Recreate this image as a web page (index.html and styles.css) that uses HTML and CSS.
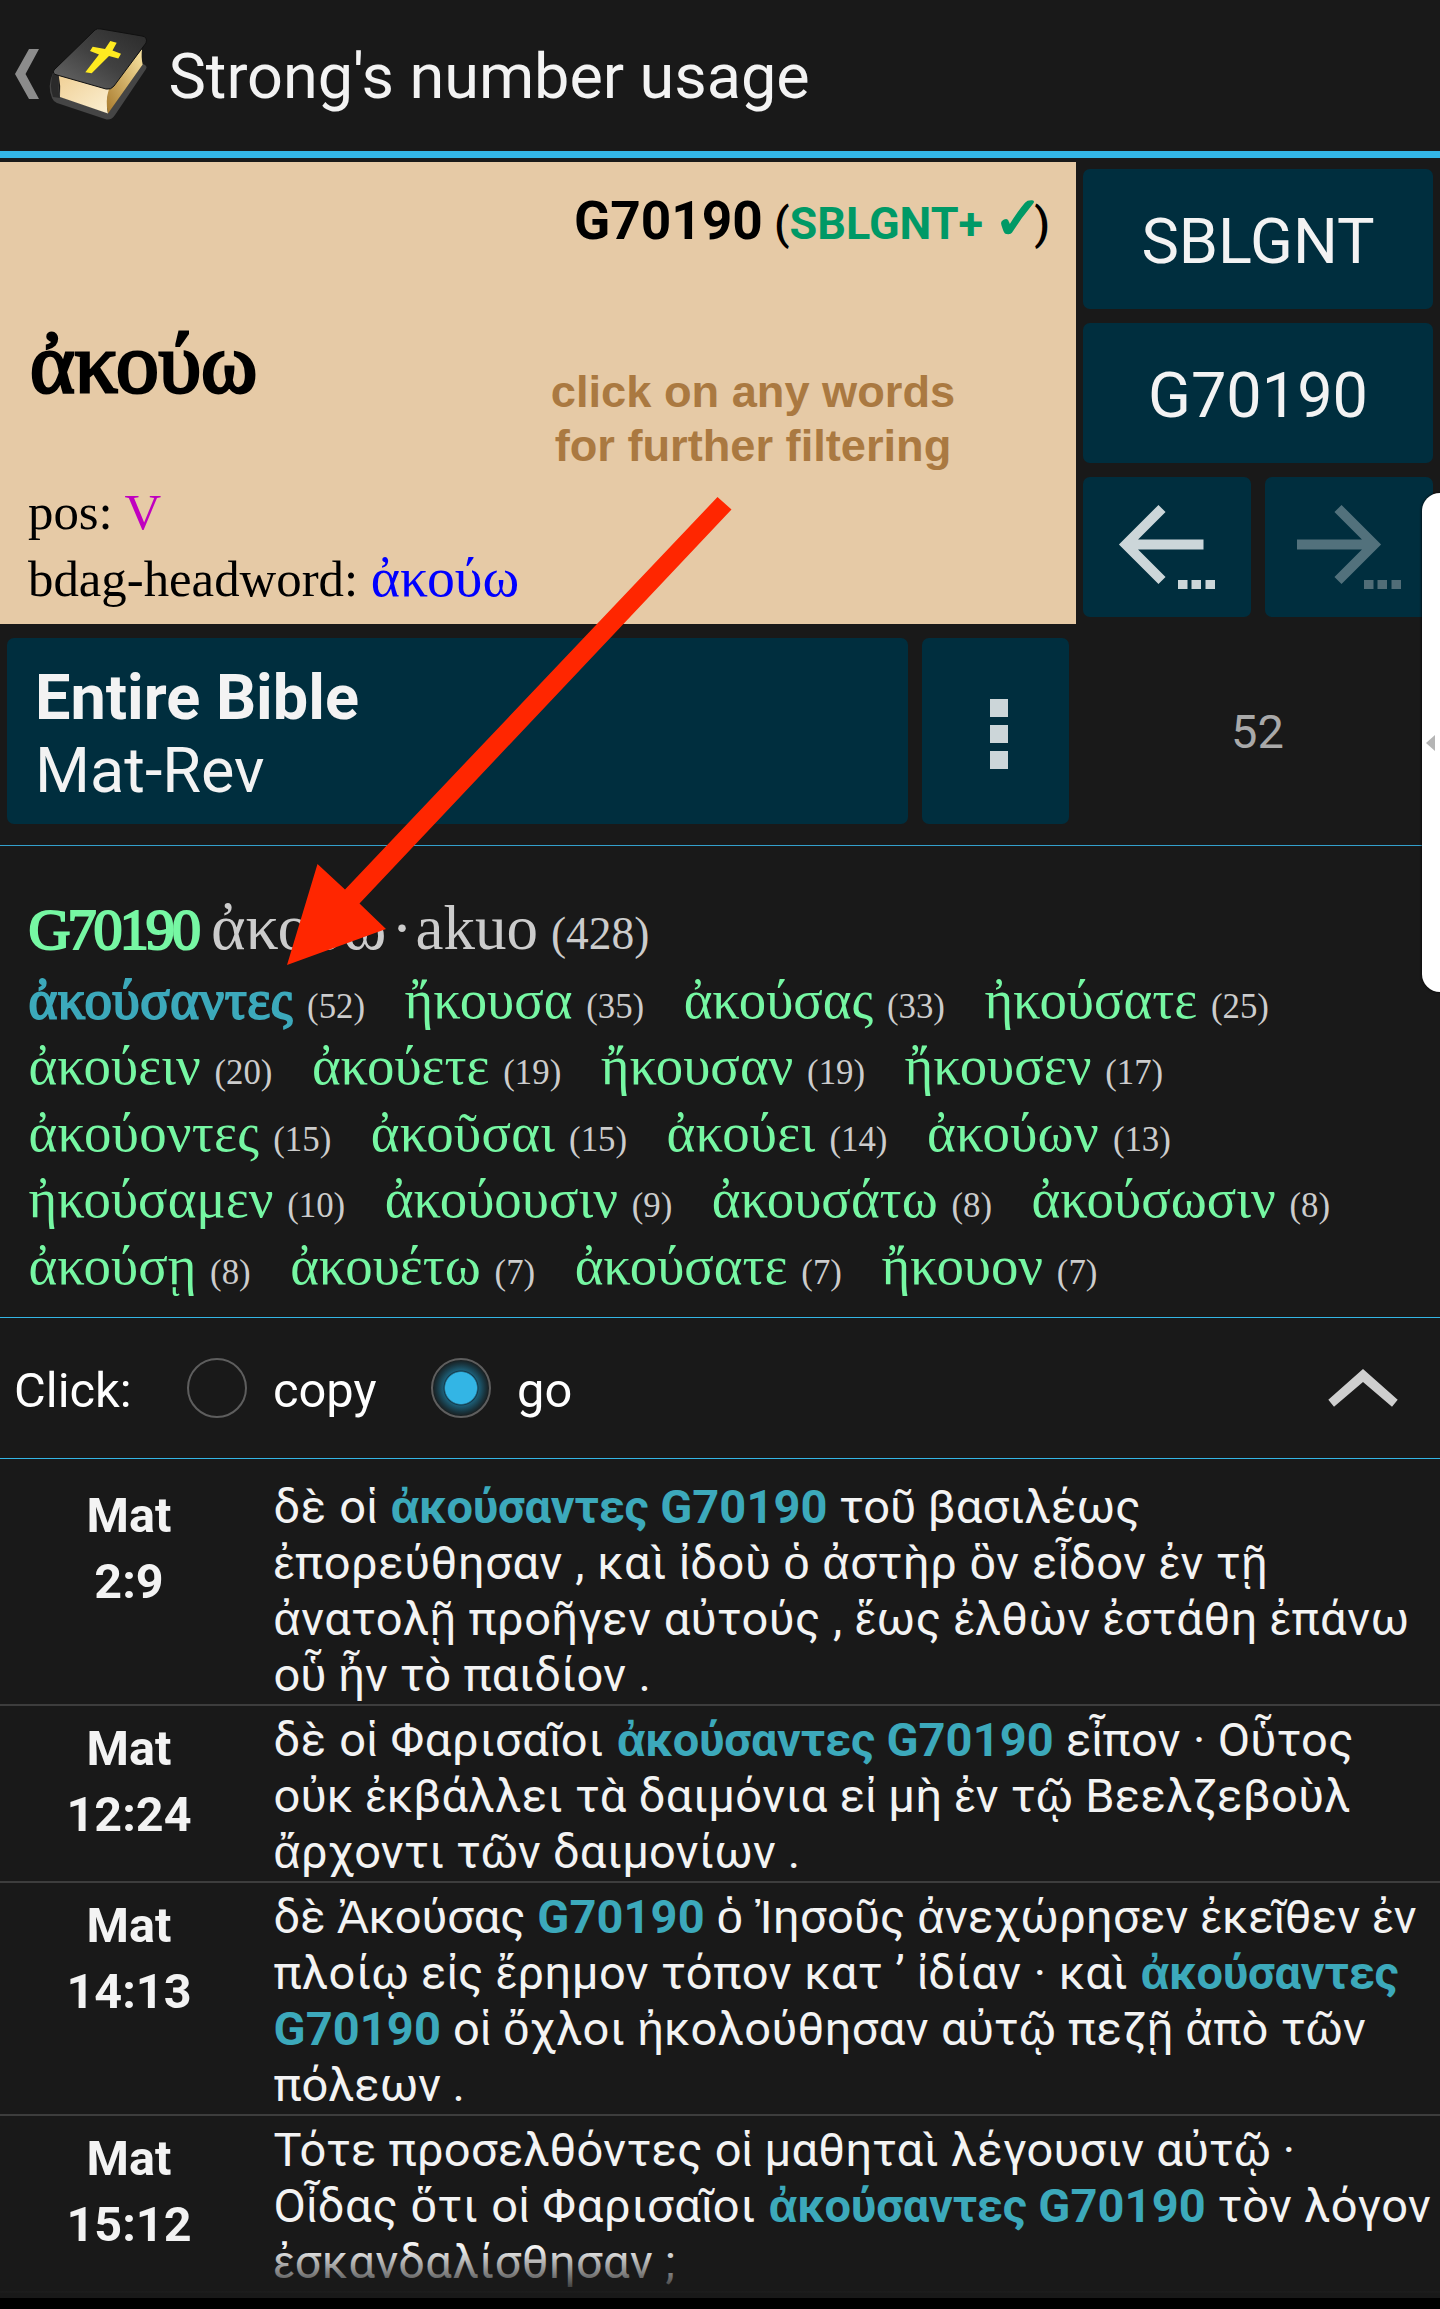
FILE: index.html
```html
<!DOCTYPE html>
<html lang="en">
<head>
<meta charset="utf-8">
<title>Strong's number usage</title>
<link rel="stylesheet" href="styles.css">
</head>
<body>
<div class="screen">
  <header class="bar">
    <svg class="bar-icon" width="150" height="151" viewBox="0 0 150 151">
      <defs>
        <linearGradient id="cover" x1="0" y1="1" x2="1" y2="0"><stop offset="0" stop-color="#6a6a6a"/><stop offset=".5" stop-color="#414141"/><stop offset="1" stop-color="#2a2a2a"/></linearGradient>
        <linearGradient id="front" x1="0" y1="0" x2="1" y2="1"><stop offset="0" stop-color="#f0d096"/><stop offset="1" stop-color="#fbf0d3"/></linearGradient>
        <linearGradient id="side" x1="0" y1="1" x2="1" y2="0"><stop offset="0" stop-color="#a87a2c"/><stop offset="1" stop-color="#fbe6a4"/></linearGradient>
      </defs>
      <path d="M29 49h10l-13.500 25 13.500 25h-10l-14-25z" fill="#8c8c8c"/>
      <path d="M53 73Q47 86 52 98Q53 101 57 103L105 119Q111 121 115 115L146 69Q148 66 143 64L108 113L61 97Q57 86 60 76z" fill="#454545"/>
      <path d="M53 73Q49 86 53 97L60 98Q57 86 60 76z" fill="#2a2a2a"/>
      <path d="M58.700 75L107 88L110 89Q105 101 108 113.500L60 97Q61 86 58.700 75z" fill="url(#front)"/>
      <path d="M109 89L142 49Q141 58 142.700 64.500L108 113.500Q105 101 109 89z" fill="url(#side)"/>
      <path d="M95 30Q97 28 101 29L142 36Q148 37 146 43L114 86Q111 90 106 89L57 75Q52 74 54 70z" fill="url(#cover)" stroke="#101010"/>
      <path d="M110.300 41L116.700 42.700L112.500 50.500L121 53.700L118.300 58.500L109 56L91.700 73.300L85.300 72.300L99 54.500L90 51L92.700 46.700L105 49z" fill="#ffea20"/>
    </svg>
    <h1 class="title">Strong's number usage</h1>
  </header>

  <section class="top">
    <div class="entry">
      <p class="entry-ref"><b>G70190</b> <span class="mid">(<em>SBLGNT+ <i>✓</i></em>)</span></p>
      <p class="headword">ἀκούω</p>
      <p class="prop">pos: <span class="magenta">V</span></p>
      <p class="prop">bdag-headword: <span class="blue">ἀκούω</span></p>
    </div>
    <div class="pad">
      <button class="btn wide">SBLGNT</button>
      <button class="btn wide">G70190</button>
      <button class="btn"><svg width="168" height="140" viewBox="0 0 168 140"><path d="M79 31.500L43 67.500L79 103.500M45 67.500H120.500" fill="none" stroke="#ccd6d9" stroke-width="10"/><path d="M95 103h9.500v9h-9.500zM108.500 103h9.500v9h-9.500zM122.500 103h9.500v9h-9.500z" fill="#ccd6d9"/></svg></button>
      <button class="btn"><svg width="168" height="140" viewBox="0 0 168 140"><g opacity=".4"><path d="M73 31.500L109 67.500L73 103.500M107 67.500H32" fill="none" stroke="#ccd6d9" stroke-width="10"/></g><path d="M99 103h9.500v9h-9.500zM112.500 103h9.500v9h-9.500zM126.500 103h9.500v9h-9.500z" fill="#516d77"/></svg></button>
    </div>
  </section>

  <section class="scope">
    <button class="btn range"><b>Entire Bible</b><span>Mat-Rev</span></button>
    <button class="btn more"><i></i><i></i><i></i></button>
    <span class="total">52</span>
  </section>

  <section class="forms">
    <p class="lemma"><b>G70190</b><span class="greek">ἀκούω</span><span class="dot">·</span><span>akuo</span><small>(428)</small></p>
    <div class="line"><span class="on">ἀκούσαντες <small>(52)</small></span><span>ἤκουσα <small>(35)</small></span><span>ἀκούσας <small>(33)</small></span><span>ἠκούσατε <small>(25)</small></span></div>
    <div class="line"><span>ἀκούειν <small>(20)</small></span><span>ἀκούετε <small>(19)</small></span><span>ἤκουσαν <small>(19)</small></span><span>ἤκουσεν <small>(17)</small></span></div>
    <div class="line t2"><span>ἀκούοντες <small>(15)</small></span><span>ἀκοῦσαι <small>(15)</small></span><span>ἀκούει <small>(14)</small></span><span>ἀκούων <small>(13)</small></span></div>
    <div class="line"><span>ἠκούσαμεν <small>(10)</small></span><span>ἀκούουσιν <small>(9)</small></span><span>ἀκουσάτω <small>(8)</small></span><span>ἀκούσωσιν <small>(8)</small></span></div>
    <div class="line"><span>ἀκούσῃ <small>(8)</small></span><span>ἀκουέτω <small>(7)</small></span><span>ἀκούσατε <small>(7)</small></span><span>ἤκουον <small>(7)</small></span></div>
  </section>

  <section class="mode">
    <span class="mode-label">Click:</span>
    <label class="option"><i class="radio"></i><span>copy</span></label>
    <label class="option"><i class="radio checked"></i><span>go</span></label>
    <svg class="collapse" width="74" height="42" viewBox="0 0 74 42"><path d="M39 2L73.700 32.700L68 39.700L39 15L10 39.700L4.300 32.700z" fill="#cfcfcf"/></svg>
  </section>

  <section class="verses">
    <article class="verse"><h2>Mat<br>2:9</h2><p><span class="t7">δὲ οἱ </span><b>ἀκούσαντες</b> <b class="num">G70190</b> <span class="t1">τοῦ βασιλέως</span><br><span class="t6">ἐπορεύθησαν , καὶ ἰδοὺ ὁ ἀστὴρ ὃν εἶδον ἐν τῇ</span><br><span class="t5">ἀνατολῇ προῆγεν αὐτούς , ἕως ἐλθὼν ἐστάθη ἐπάνω</span><br><span class="t3">οὗ ἦν τὸ παιδίον .</span></p></article>
    <article class="verse"><h2>Mat<br>12:24</h2><p><span class="t7">δὲ οἱ Φαρισαῖοι </span><b>ἀκούσαντες</b> <b class="num">G70190</b><span class="t4"> εἶπον · Οὗτος</span><br><span class="t4">οὐκ ἐκβάλλει τὰ δαιμόνια εἰ μὴ ἐν τῷ Βεελζεβοὺλ</span><br><span class="t2">ἄρχοντι τῶν δαιμονίων .</span></p></article>
    <article class="verse"><h2>Mat<br>14:13</h2><p>δὲ Ἀκούσας <b class="num">G70190</b><span class="t3"> ὁ Ἰησοῦς ἀνεχώρησεν ἐκεῖθεν ἐν</span><br><span class="t5">πλοίῳ εἰς ἔρημον τόπον κατ ’ ἰδίαν · καὶ </span><b>ἀκούσαντες</b><br><b class="num">G70190</b><span class="t4"> οἱ ὄχλοι ἠκολούθησαν αὐτῷ πεζῇ ἀπὸ τῶν</span><br>πόλεων .</p></article>
    <article class="verse"><h2>Mat<br>15:12</h2><p><span class="t3">Τότε προσελθόντες οἱ μαθηταὶ λέγουσιν αὐτῷ ·</span><br><span class="t7">Οἶδας ὅτι οἱ Φαρισαῖοι </span><b>ἀκούσαντες</b> <b class="num">G70190</b><span class="t4"> τὸν λόγον</span><br><span class="t4">ἐσκανδαλίσθησαν ;</span></p></article>
  </section>

  <div class="fade"></div>
  <p class="hint">click on any words<br>for further filtering</p>
  <svg class="arrow" width="460" height="480" viewBox="280 490 460 480"><path d="M717.500 497L731.500 509.500L359.500 903.500L386 929L287 965L317.500 864L345 889.500z" fill="#ff2600"/></svg>
  <div class="edge"><svg width="10" height="16" viewBox="0 0 10 16"><path d="M0 8L9 0V16z" fill="#b5b5b5"/></svg></div>
</div>
</body>
</html>
```

FILE: styles.css
```css
* { box-sizing: border-box; margin: 0; padding: 0; }
body { background: #191919; }
.screen { position: relative; width: 1440px; height: 2309px; overflow: hidden; background: #191919; color: #f3f3f3; font-family: Roboto, sans-serif; }
.bar { display: flex; height: 158px; border-bottom: 7px solid #33b5e5; }
.bar-icon { flex: none; }
.title { margin-left: 18.5px; font-size: 63px; font-weight: 400; line-height: 154px; letter-spacing: -.06px; white-space: nowrap; }
.top { display: flex; height: 466px; padding-top: 4px; }
.entry { width: 1076px; height: 462px; background: #e6caa6; color: #000; padding: 0 26px 0 28px; font-family: "Liberation Serif", serif; }
.entry-ref { height: 150px; padding-top: 27px; text-align: right; font: 45px/64px Roboto, sans-serif; white-space: nowrap; }
.entry-ref b { font-size: 53.2px; font-weight: 700; }
.mid { font-weight: 500; }
.entry-ref em { font-style: normal; font-weight: 700; color: #009966; }
.entry-ref i { margin: 0 -8.5px 0 -1.5px; font-size: 60px; line-height: 0; font-style: normal; }
.headword { height: 167px; padding-left: 2px; font-size: 85.5px; font-weight: 400; line-height: 103px; -webkit-text-stroke: 3px #000; }
.prop { height: 67px; font-size: 50.8px; line-height: 67px; white-space: nowrap; }
.magenta { color: #c000c0; }
.blue { font-size: 55.8px; line-height: 0; color: #00f; }
.pad { display: grid; grid-template-columns: 168px 168px; grid-auto-rows: 140px; gap: 14px; padding: 7px; }
.btn { display: flex; flex: none; align-items: center; justify-content: center; border: 0; border-radius: 7px; background: #002e3e; color: #f3f3f3; font: 63px/72px Roboto, sans-serif; }
.wide { grid-column: span 2; padding-top: 5px; }
.scope { display: flex; height: 222px; padding: 14px 7px; border-bottom: 1px solid #33a0cc; }
.range { flex-direction: column; align-items: flex-start; width: 901px; height: 186px; padding: 5px 0 0 28px; line-height: 73px; }
.more { flex-direction: column; gap: 8px; width: 147px; height: 186px; margin-left: 14px; padding: 5px 0 0 6px; }
.more i { width: 18px; height: 18px; background: #ccd6d9; }
.total { flex: none; width: 363px; margin-left: 7px; text-align: center; color: #a9a9a9; font-size: 47px; line-height: 188px; }
.forms { height: 472px; padding: 39px 28px 0 28.5px; border-bottom: 1px solid #33b5e5; font-family: "Liberation Serif", serif; color: #ccc; white-space: nowrap; }
.lemma { display: flex; align-items: baseline; height: 81.5px; font-size: 63px; line-height: 83px; }
.lemma b { margin-right: 13px; font-size: 58px; font-weight: 400; letter-spacing: -2.9px; color: #76f7a3; -webkit-text-stroke: 2.2px #76f7a3; }
.greek { font-size: 66px; }
.dot { margin: 0 3px 0 5px; }
.lemma small { margin-left: 13px; font-size: 45.5px; }
.line { display: flex; gap: 39.5px; height: 66.5px; font-size: 54.8px; line-height: 66px; color: #76f7a3; }
.line small { font-size: 34.8px; color: #ccc; letter-spacing: 0; -webkit-text-stroke: 0; }
.on { color: #3ca9bb; letter-spacing: .5px; -webkit-text-stroke: 2px #3ca9bb; }
.mode { display: flex; align-items: center; height: 141px; padding: 0 42px 0 14px; border-bottom: 1px solid #33b5e5; font-size: 48.8px; color: #fff; }
.mode-label { width: 173px; padding-top: 4px; }
.option { display: flex; align-items: center; width: 244px; }
.option span { padding-top: 4px; }
.radio { width: 60px; height: 60px; margin-right: 26px; border: 2px solid #5e5e5e; border-radius: 50%; }
.checked { background: radial-gradient(circle, #33b5e5 0 15.500px, #14394a 17px, #1c5c74 18px, #19353f 24px, #191919 29px); }
.collapse { margin-left: auto; }
.verses { padding-top: 14px; }
.verse { display: flex; border-bottom: 2px solid #3d3d3d; }
.verse h2 { width: 258px; padding-top: 10px; text-align: center; font-size: 48.5px; line-height: 66px; font-weight: 700; }
.verse p { margin-left: 15.500px; padding: 6px 0 1px; font-size: 47px; line-height: 56px; white-space: nowrap; }
.verse b { color: #3ca9bb; letter-spacing: -.3px; }
.verse .num { letter-spacing: .1px; }
.t1 { letter-spacing: .1px; }
.t2 { letter-spacing: .25px; }
.t3 { letter-spacing: .3px; }
.t4 { letter-spacing: .4px; }
.t5 { letter-spacing: .52px; }
.t6 { letter-spacing: .6px; }
.t7 { letter-spacing: .72px; }
.fade { position: absolute; left: 0; right: 0; bottom: 0; height: 61px; background: linear-gradient(rgba(25,25,25,0), #191919 48px, #191919 50px, #000 50px); }
.hint { position: absolute; left: 500px; top: 364.500px; width: 506px; text-align: center; color: #aa7941; font: 700 45.2px/54px "Liberation Sans", sans-serif; }
.arrow { position: absolute; left: 280px; top: 490px; }
.edge { position: absolute; right: 0; top: 493px; display: flex; align-items: center; width: 18px; height: 499px; padding-left: 4px; border-radius: 18px 0 0 18px; background: #fff; box-shadow: 0 0 3px #000; }
```
